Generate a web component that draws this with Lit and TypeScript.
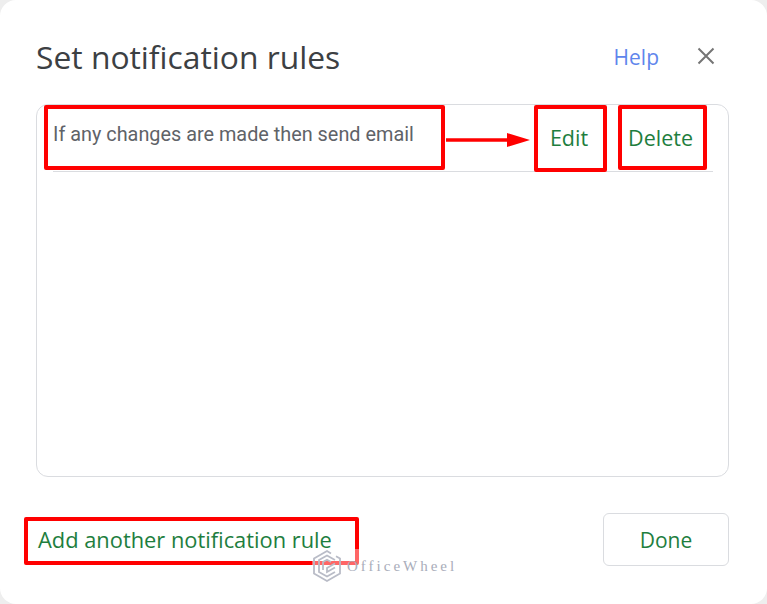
import { LitElement, html, css } from "lit";
import { customElement } from "lit/decorators.js";

@customElement("app-root")
export class AppRoot extends LitElement {
  protected render() {
    return html`
      <div class="dialog">
        <header class="head">
          <h1>Set notification rules</h1>
          <a class="help">Help</a>
          <svg class="close" viewBox="0 0 18 18" width="18" height="18">
            <path d="M1.500 1.500 16.500 16.500M16.500 1.500 1.500 16.500" stroke="#757575" stroke-width="2" fill="none" />
          </svg>
        </header>

        <section class="panel">
          <div class="rule">
            <span class="rule-text">If any changes are made then send email</span>
            <a class="edit">Edit</a>
            <a class="delete">Delete</a>
          </div>
        </section>

        <footer class="foot">
          <a class="add">Add another notification rule</a>
          <button class="done">Done</button>
        </footer>

        <!-- annotations drawn over the screenshot -->
        <div class="mark m-text"></div>
        <div class="mark m-edit"></div>
        <div class="mark m-delete"></div>
        <div class="mark m-add"></div>
        <svg class="arrow" viewBox="0 0 86 14" width="86" height="14">
          <path d="M0 5.200h62v3.600H0z" fill="#f00" />
          <path d="M61 0 84 7 61 14z" fill="#f00" />
        </svg>

        <div class="wm">
          <svg viewBox="0 0 30 34" width="30" height="34" fill="none" stroke="#b9bcc7" stroke-width="1.800">
            <path d="M19 4.500 15 2 2 9.500v15L15 32l13-7.500v-15l-4-2.300" />
            <path d="M23 11 15 6.500 7 11v12l8 4.500 8-4.500" />
            <path d="M11 21v-8l4-2.300 4 2.300M23 14.500l-8 4.500v4l8-4.500" />
          </svg>
          <span>OfficeWheel</span>
        </div>
      </div>
    `;
  }

  static styles = css`
    :host {
      display: block;
      width: 767px;
      height: 604px;
      background: #eeeeee;
      font-family: Roboto, "Noto Sans", sans-serif;
    }
    .dialog {
      position: relative;
      box-sizing: border-box;
      width: 767px;
      height: 604px;
      padding: 0 38px 0 36px;
      background: #fff;
      border-radius: 16px;
      display: flex;
      flex-direction: column;
      overflow: hidden;
    }
    .head {
      display: flex;
      align-items: center;
      height: 104px;
      padding-top: 8px;
      box-sizing: border-box;
    }
    h1 {
      margin: 0;
      flex: 1;
      font-family: "Open Sans", sans-serif;
      font-size: 31.800px;
      font-weight: 400;
      color: #3c4043;
    }
    .help {
      font-family: "Open Sans", sans-serif;
      font-size: 21px;
      color: #5f86ec;
      margin-right: 38px;
      position: relative;
      top: 1px;
    }
    .close {
      margin-right: 14px;
    }
    .panel {
      box-sizing: border-box;
      height: 373px;
      border: 1px solid #dadce0;
      border-radius: 12px;
      padding: 0 15px 0 16px;
    }
    .rule {
      display: flex;
      align-items: center;
      height: 66px;
      border-bottom: 1px solid #dadce0;
      color: #5f6368;
      font-size: 19.850px;
    }
    .rule-text {
      flex: 1;
      position: relative;
      top: -4px;
    }
    .edit,
    .delete,
    .add,
    .done {
      color: #1e7e3e;
      font-weight: 500;
      font-family: "Open Sans", sans-serif;
    }
    .edit,
    .delete {
      font-size: 21.500px;
      position: relative;
      top: -1px;
    }
    .edit {
      margin-right: 39px;
      left: -1px;
    }
    .delete {
      margin-right: 20px;
    }
    .foot {
      flex: 1;
      display: flex;
      align-items: flex-start;
      justify-content: space-between;
      padding-top: 36px;
    }
    .add {
      margin: 12px 0 0 2px;
      font-size: 21.850px;
    }
    .done {
      width: 126px;
      height: 53px;
      background: #fff;
      border: 1px solid #dadce0;
      border-radius: 6px;
      font-size: 21px;
      padding: 0;
    }
    .mark {
      position: absolute;
      box-sizing: border-box;
      border: 4px solid #f00;
      border-radius: 2px;
    }
    .m-text {
      left: 44px;
      top: 105px;
      width: 401px;
      height: 65px;
    }
    .m-edit {
      left: 534px;
      top: 105px;
      width: 73px;
      height: 67px;
    }
    .m-delete {
      left: 618px;
      top: 105px;
      width: 89px;
      height: 65px;
    }
    .m-add {
      left: 24px;
      top: 517px;
      width: 335px;
      height: 48px;
    }
    .arrow {
      position: absolute;
      left: 446px;
      top: 133px;
    }
    .wm {
      position: absolute;
      left: 312px;
      top: 549px;
      display: flex;
      align-items: center;
      gap: 5px;
      background: rgba(255, 255, 255, 0.4);
      color: #a9adba;
      font-family: "Liberation Serif", serif;
      font-size: 15px;
      letter-spacing: 3px;
    }
  `;
}
